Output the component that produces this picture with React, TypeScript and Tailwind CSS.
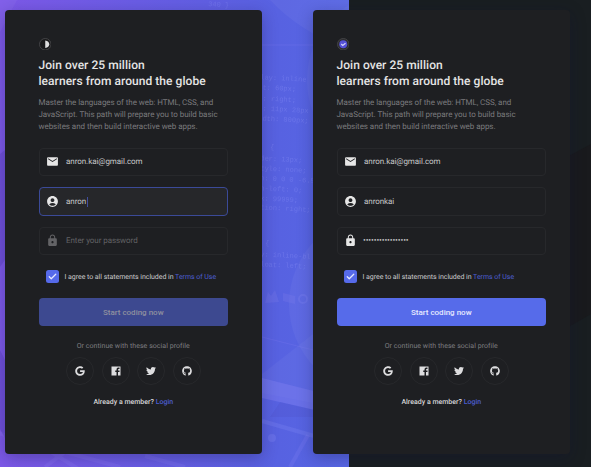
import type { ReactNode } from "react";
import { MdAccountCircle, MdEmail, MdLock } from "react-icons/md";
import { FaGithub, FaGoogle, FaTwitter } from "react-icons/fa";

const codeLines: [number, number, string][] = [
  [208, 6, "340  }"],
  [270, 149, "{"],
  [256, 79, "play: inline"],
  [254, 89, "ght: 60px;"],
  [254, 100, "at: right;"],
  [254, 110, "in: 11px 28px"],
  [254, 120, "width: 800px;"],
  [256, 160, "rder: 13px;"],
  [256, 170, "style: none;"],
  [260, 180, "n: 0 0 0 -6.5"],
  [256, 190, "in-left: 0;"],
  [256, 200, "ex: 99999;"],
  [256, 209, "ition: right;"],
  [265, 245, "{"],
  [256, 256, "ay: inline-bl"],
  [256, 266, "float: left;"],
];

function Backdrop() {
  return (
    <svg className="absolute inset-0 h-full w-full" viewBox="0 0 591 467" aria-hidden="true">
      <defs>
        <linearGradient id="violet" x1="0" y1="0" x2="1" y2="0">
          <stop offset="0" stopColor="#7d59e8" />
          <stop offset="0.5" stopColor="#655ee4" />
          <stop offset="0.8" stopColor="#5762e1" />
          <stop offset="1" stopColor="#5867e5" />
        </linearGradient>
        <filter id="soft"><feGaussianBlur stdDeviation="0.7" /></filter>
        <clipPath id="half"><rect width="349" height="467" /></clipPath>
      </defs>
      <rect width="591" height="467" fill="#191a1d" />
      <path d="M349 0H591V144L565 158L349 120ZM591 314L565 329L349 450V467H591Z" fill="#191e21" />
      <rect width="349" height="467" fill="url(#violet)" />
      <g clipPath="url(#half)" filter="url(#soft)">
        <path d="M0 0H17L0 32ZM107 0H270Q300 32 349 50V0Z" fill="#fff" fillOpacity="0.04" />
        <circle cx="380" cy="304" r="91" fill="#fff" fillOpacity="0.04" />
        <circle cx="395" cy="80" r="88" fill="#fff" fillOpacity="0.03" />
        <path d="M262 374L349 306V410L262 393Z" fill="#fff" fillOpacity="0.035" />
        <path d="M262 378L349 400V418L262 398Z" fill="#8985f5" fillOpacity="0.36" />
        <path d="M280 402L315 410V417H270Z" fill="#4d56cf" fillOpacity="0.35" />
        <path d="M262 421L349 446" stroke="#8a91f5" strokeWidth="4" strokeOpacity="0.22" />
        <path d="M265 303L268 292L271 296L275 290L279 302ZM283 293L295 296V304L283 301Z" fill="#7e7bed" fillOpacity="0.25" />
        <circle cx="303" cy="299" r="4" fill="none" stroke="#8887f3" strokeWidth="2" strokeOpacity="0.25" />
        <circle cx="272" cy="438" r="4" fill="#7c82f2" fillOpacity="0.35" />
        <path d="M-5 432L40 445L80 470M45 467L65 452L120 467M145 456L185 467M290 467L308 435" fill="none" stroke="#a196ff" strokeWidth="4" strokeOpacity="0.13" />
        <path d="M262 45H313M262 337L313 350" fill="none" stroke="#a196ff" strokeWidth="1" strokeOpacity="0.12" />
        <path d="M0 154L5 150V260L0 267ZM0 350L5 360V438L0 429Z" fill="#523ebb" fillOpacity="0.35" />
        <g fill="#8a91f7" fillOpacity="0.36" fontFamily="Liberation Mono, monospace" fontSize="7">
          {codeLines.map(([x, y, text]) => (
            <text key={`${x}-${y}`} x={x} y={y} transform={`rotate(3 ${x} ${y})`}>{text}</text>
          ))}
        </g>
      </g>
    </svg>
  );
}

function Field({ icon, children, active = false, muted = false }: { icon: ReactNode; children: ReactNode; active?: boolean; muted?: boolean }) {
  return (
    <div className={`flex h-[28.5px] items-center rounded-[4px] border pl-[6.5px] text-[8px] tracking-[-0.06px] ${active ? "border-[#3b4a98] bg-[#26272a]" : "border-[#27282b]"} ${muted ? "text-[#626265]" : "text-[#c6c6c7]"}`}>
      <span className={`mr-[7px] text-[13px] ${muted ? "text-[#636366]" : "text-[#e6e6e6]"}`}>{icon}</span>
      <span className="flex items-center pt-px">{children}</span>
    </div>
  );
}

function FacebookIcon() {
  return (
    <svg className="size-[10px]" viewBox="0 0 20 20" fill="currentColor">
      <path d="M1 1H19V19H14V12H17V9H14V7.5Q14 6 15.5 6H17V3H14.5Q11 3 11 7V9H8.5V12H11V19H1Z" />
    </svg>
  );
}

function SignUpCard({ complete = false }: { complete?: boolean }) {
  return (
    <section className={`h-[444px] w-[257px] shrink-0 rounded-[4px] bg-[#1e1f22] pt-[27.5px] shadow-[0_4px_16px_rgba(18,18,55,0.3)] ${complete ? "pr-[24px] pl-[23.5px]" : "pr-[34px] pl-[33.5px]"}`}>
      <svg className="size-[12.5px]" viewBox="0 0 25 25">
        <circle cx="12.5" cy="12.5" r="11.5" fill={complete ? "#2c2c2f" : "#19191b"} stroke="#434346" strokeWidth="2" />
        {complete ? (
          <>
            <circle cx="12.5" cy="12.5" r="8" fill="#5551d8" />
            <path d="M8.5 12L11.5 15L17 10.5" fill="none" stroke="#d5d4f8" strokeWidth="2.5" />
          </>
        ) : (
          <path d="M12.5 5Q20.5 6.5 20.5 12.5T12.5 20Z" fill="#dededf" />
        )}
      </svg>
      <h1 className="mt-[6.5px] text-[12px] leading-[16px] font-medium tracking-[0.05px] whitespace-nowrap text-[#e5e5e5]">
        Join over 25 million<br />learners from around the globe
      </h1>
      <p className="mt-[8.5px] text-[8px] leading-[12px] tracking-[-0.05px] whitespace-nowrap text-[#7a7a7d]">
        Master the languages of the web: HTML, CSS, and<br />JavaScript. This path will prepare you to build basic<br />websites and then build interactive web apps.
      </p>
      <div className="mt-[14.5px] flex flex-col gap-[11px]">
        <Field icon={<MdEmail />}>anron.kai@gmail.com</Field>
        <Field icon={<MdAccountCircle />} active={!complete}>
          {complete ? "anronkai" : <>anron<span className="ml-[1px] h-[10px] w-px bg-[#3f4e9f]" /></>}
        </Field>
        <Field icon={<MdLock />} muted={!complete}>
          {complete ? <span className="-ml-[1px] text-[8.4px] tracking-[-0.15px]">•••••••••••••••••</span> : "Enter your password"}
        </Field>
      </div>
      <div className="mt-[15px] ml-[7.5px] flex h-[12.5px] items-center">
        <span className="mr-[6px] flex size-[12.5px] shrink-0 items-center justify-center rounded-[2.5px] bg-[#566aea]">
          <svg className="size-[9px]" viewBox="0 0 18 18" fill="none" stroke="#e5e9ff" strokeWidth="2.5" strokeLinecap="round" strokeLinejoin="round"><path d="M2.5 9.5L6.5 13.5L15.5 4.5" /></svg>
        </span>
        <span className="pt-px text-[7px] tracking-[-0.04px] whitespace-nowrap text-[#cacacb]">I agree to all statements included in <a className="text-[#4c5ed0]">Terms of Use</a></span>
      </div>
      <button className={`mt-[15.5px] flex h-[28px] w-full items-center justify-center rounded-[4px] pt-px text-[8px] font-medium ${complete ? "bg-[#566bea] text-[#e7eaff]" : "bg-[#3d4990] text-[#8f909f]"}`}>
        Start coding now
      </button>
      <p className="mt-[15px] text-center text-[7px] leading-[11px] tracking-[0.05px] text-[#7d7d80]">Or continue with these social profile</p>
      <div className="mt-[5px] flex justify-center gap-[7.5px] text-[#dddddf]">
        {[<FaGoogle />, <FacebookIcon />, <FaTwitter />, <FaGithub />].map((icon, i) => (
          <span key={i} className="flex size-[28px] items-center justify-center rounded-full border border-[#27282b] text-[10px]">{icon}</span>
        ))}
      </div>
      <p className="mt-[12px] text-center text-[7px] leading-[11px] font-medium text-[#d5d5d6]">Already a member? <a className="text-[#4c5ed0]">Login</a></p>
    </section>
  );
}

export default function App() {
  return (
    <main className="relative h-[467px] w-[591px] overflow-hidden font-['Roboto',sans-serif] [text-rendering:geometricPrecision]">
      <Backdrop />
      <div className="relative flex gap-[51px] pt-[10px] pl-[5px]">
        <SignUpCard />
        <SignUpCard complete />
      </div>
    </main>
  );
}
